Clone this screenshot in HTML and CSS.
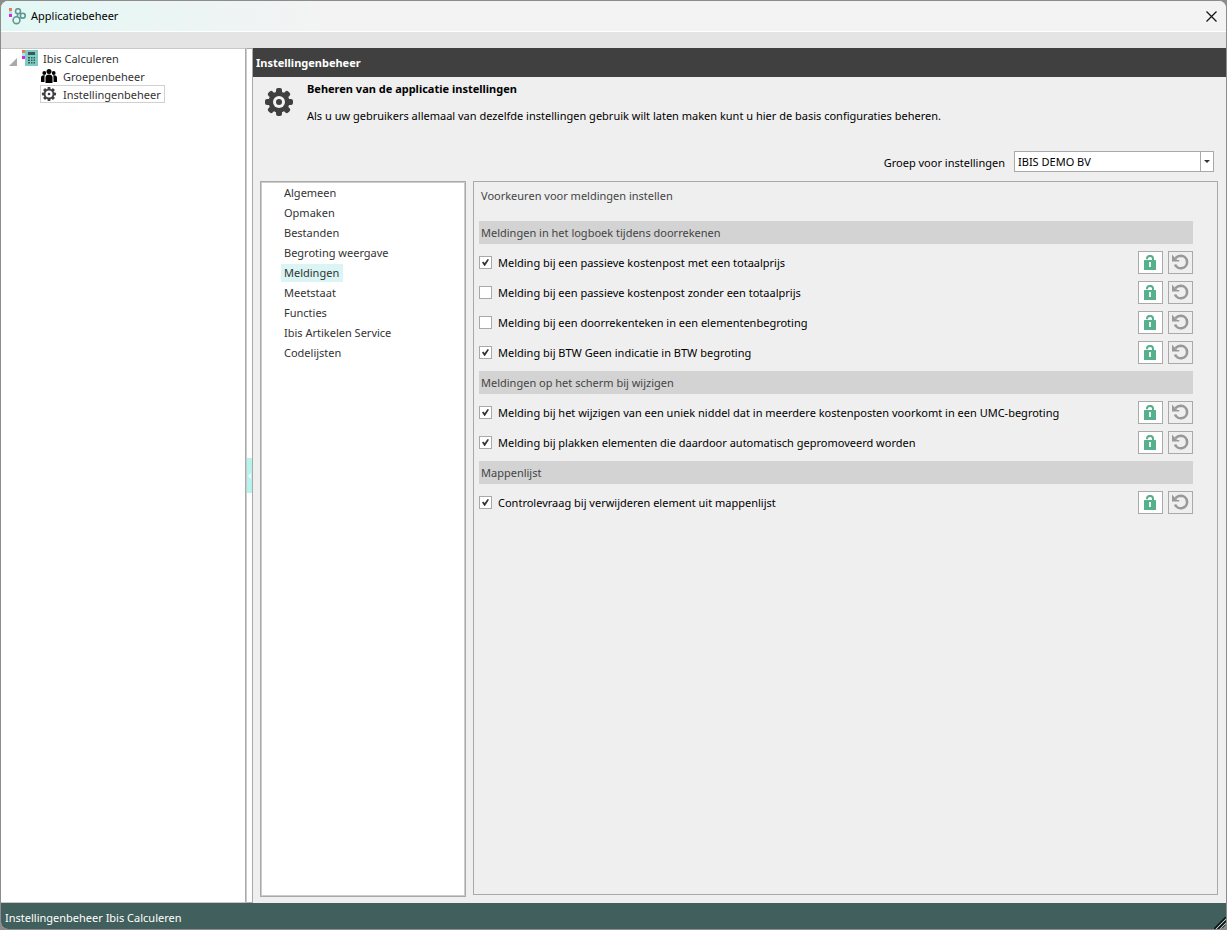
FILE: index.html
```html
<!DOCTYPE html>
<html lang="nl">
<head>
<meta charset="utf-8">
<title>Applicatiebeheer</title>
<meta name="viewport" content="width=device-width, initial-scale=1">
<link rel="stylesheet" href="styles.css">
</head>
<body>
<svg class="sprite" aria-hidden="true">
  <symbol id="gear" viewBox="0 0 28 28">
    <g fill="currentColor">
      <rect x="11" y="0" width="6" height="28" rx="2"/>
      <rect x="11" y="0" width="6" height="28" rx="2" transform="rotate(45 14 14)"/>
      <rect x="11" y="0" width="6" height="28" rx="2" transform="rotate(90 14 14)"/>
      <rect x="11" y="0" width="6" height="28" rx="2" transform="rotate(135 14 14)"/>
      <circle cx="14" cy="14" r="10.5"/>
    </g>
    <circle cx="14" cy="14" r="6" fill="#f3f3f3"/>
    <circle cx="14" cy="14" r="3" fill="currentColor"/>
  </symbol>
  <symbol id="gear-small" viewBox="0 0 14 14">
    <g fill="currentColor">
      <rect x="5.500" y="0" width="3" height="14" rx=".8"/>
      <rect x="5.500" y="0" width="3" height="14" rx=".8" transform="rotate(45 7 7)"/>
      <rect x="5.500" y="0" width="3" height="14" rx=".8" transform="rotate(90 7 7)"/>
      <rect x="5.500" y="0" width="3" height="14" rx=".8" transform="rotate(135 7 7)"/>
      <circle cx="7" cy="7" r="5.300"/>
    </g>
    <circle cx="7" cy="7" r="3.500" fill="#fff"/>
    <circle cx="7" cy="7" r="1.300" fill="currentColor"/>
  </symbol>
  <symbol id="lock" viewBox="0 0 13 15">
    <path d="M3 4.200V3.700a3 2.800 0 0 1 6 0V6" fill="none" stroke="#56b08c" stroke-width="2"/>
    <rect x="0" y="5" width="12" height="10" rx=".5" fill="#56b08c"/>
    <rect x="5" y="7" width="2" height="5" fill="#e8f5ef"/>
  </symbol>
  <symbol id="undo" viewBox="0 0 17 17">
    <path d="M3.500 4.300C4.800 2.700 6.800 1.700 9 1.700a6.300 6.300 0 1 1-6 8.800" fill="none" stroke="#999" stroke-width="2.600"/>
    <path d="M0 .5V7.500h7.300V6H5.200L2.400 3.300z" fill="#999"/>
  </symbol>
</svg>
<div class="window">
  <header class="titlebar">
    <svg class="app-icon" viewBox="0 0 17 17" aria-hidden="true">
      <path d="M0 0h3v3H0z" fill="#f0755f"/><path d="M0 3h3v3H0z" fill="#a6ebe3"/><path d="M0 6h3v3H0z" fill="#e41cf0"/>
      <g fill="none" stroke="#5d9990" stroke-width="1.6">
        <circle cx="9" cy="3.200" r="2.500"/><circle cx="13.800" cy="7.700" r="2.400"/><circle cx="7.500" cy="12.200" r="3.400"/>
        <path d="M8.500 5.500v3M10.700 5l1.300 1.200M10.300 10.500l1.500-1.200"/>
      </g>
    </svg>
    <h1 class="window-title">Applicatiebeheer</h1>
    <button class="close" type="button" aria-label="Sluiten">
      <svg viewBox="0 0 11 11" width="11" height="11"><path d="M.5.5l10 10M10.500.5l-10 10" stroke="#111" stroke-width="1.200"/></svg>
    </button>
  </header>
  <div class="toolbar"></div>
  <div class="body">
    <nav class="tree" aria-label="Onderdelen">
      <div class="node root">
        <svg class="twisty" viewBox="0 0 8 8" aria-hidden="true"><path d="M8 0v8H0z" fill="#a9a9a9"/></svg>
        <svg class="calc" viewBox="0 0 16 16" aria-hidden="true">
          <rect x="3" width="13" height="16" fill="#7cccc4"/>
          <path d="M0 0h3v3H0z" fill="#f0755f"/><path d="M0 3h3v3H0z" fill="#a6ebe3"/><path d="M0 6h3v3H0z" fill="#e41cf0"/>
          <path d="M6 2h7v3H6zM6 7h2v1.500H6zM9 7h1.500v1.500H9zM11.500 7h1.500v1.500h-1.500zM6 9.500h2V11H6zM9 9.500h1.500V11H9zM11.500 9.500h1.500V11h-1.500zM6 12h2v1.500H6zM9 12h1.500v1.500H9zM11.500 12h1.500v1.500h-1.500z" fill="#3a5a58"/>
        </svg>
        <a href="#calculeren">Ibis Calculeren</a>
      </div>
      <div class="node">
        <svg class="node-icon" viewBox="0 0 16 14" aria-hidden="true">
          <circle cx="8" cy="2.500" r="2.500"/><circle cx="3.300" cy="4" r="1.900"/><circle cx="12.700" cy="4" r="1.900"/>
          <path d="M4.500 14V8.500C4.500 6.500 6 5.500 8 5.500s3.500 1 3.500 3V14z"/>
          <path d="M0 13V9c0-1.800 1-2.700 2.600-2.700.6 0 1 .1 1.300.3-.3.700-.4 1.300-.4 2V13zM16 13V9c0-1.800-1-2.700-2.600-2.700-.6 0-1 .1-1.300.3.3.7.4 1.300.4 2V13z"/>
        </svg>
        <a href="#groepen">Groepenbeheer</a>
      </div>
      <div class="node selected">
        <svg class="node-icon" aria-hidden="true"><use href="#gear-small"/></svg>
        <a href="#instellingen" aria-current="page">Instellingenbeheer</a>
      </div>
    </nav>
    <div class="splitter">
      <button class="collapse" type="button" aria-label="Paneel inklappen"></button>
    </div>
    <main class="content">
      <h2 class="content-title">Instellingenbeheer</h2>
      <section class="intro">
        <svg class="intro-icon" aria-hidden="true"><use href="#gear"/></svg>
        <div>
          <h3>Beheren van de applicatie instellingen</h3>
          <p>Als u uw gebruikers allemaal van dezelfde instellingen gebruik wilt laten maken kunt u hier de basis configuraties beheren.</p>
        </div>
      </section>
      <div class="group-row">
        <label for="group">Groep voor instellingen</label>
        <div class="combo">
          <select id="group"><option>IBIS DEMO BV</option></select>
          <span class="combo-arrow"></span>
        </div>
      </div>
      <div class="panes">
        <nav class="categories" aria-label="Categorieën">
          <a href="#algemeen">Algemeen</a>
          <a href="#opmaken">Opmaken</a>
          <a href="#bestanden">Bestanden</a>
          <a href="#weergave">Begroting weergave</a>
          <a href="#meldingen" class="active">Meldingen</a>
          <a href="#meetstaat">Meetstaat</a>
          <a href="#functies">Functies</a>
          <a href="#artikelen">Ibis Artikelen Service</a>
          <a href="#codelijsten">Codelijsten</a>
        </nav>
        <form class="settings">
          <p class="settings-title">Voorkeuren voor meldingen instellen</p>
          <h4>Meldingen in het logboek tijdens doorrekenen</h4>
          <div class="setting"><label><input type="checkbox" checked>Melding bij een passieve kostenpost met een totaalprijs</label><button class="lock" type="button" aria-label="Vergrendelen"><svg><use href="#lock"/></svg></button><button class="undo" type="button" aria-label="Herstellen"><svg><use href="#undo"/></svg></button></div>
          <div class="setting"><label><input type="checkbox">Melding bij een passieve kostenpost zonder een totaalprijs</label><button class="lock" type="button" aria-label="Vergrendelen"><svg><use href="#lock"/></svg></button><button class="undo" type="button" aria-label="Herstellen"><svg><use href="#undo"/></svg></button></div>
          <div class="setting"><label><input type="checkbox">Melding bij een doorrekenteken in een elementenbegroting</label><button class="lock" type="button" aria-label="Vergrendelen"><svg><use href="#lock"/></svg></button><button class="undo" type="button" aria-label="Herstellen"><svg><use href="#undo"/></svg></button></div>
          <div class="setting"><label><input type="checkbox" checked>Melding bij BTW Geen indicatie in BTW begroting</label><button class="lock" type="button" aria-label="Vergrendelen"><svg><use href="#lock"/></svg></button><button class="undo" type="button" aria-label="Herstellen"><svg><use href="#undo"/></svg></button></div>
          <h4>Meldingen op het scherm bij wijzigen</h4>
          <div class="setting"><label><input type="checkbox" checked>Melding bij het wijzigen van een uniek niddel dat in meerdere kostenposten voorkomt in een UMC-begroting</label><button class="lock" type="button" aria-label="Vergrendelen"><svg><use href="#lock"/></svg></button><button class="undo" type="button" aria-label="Herstellen"><svg><use href="#undo"/></svg></button></div>
          <div class="setting"><label><input type="checkbox" checked>Melding bij plakken elementen die daardoor automatisch gepromoveerd worden</label><button class="lock" type="button" aria-label="Vergrendelen"><svg><use href="#lock"/></svg></button><button class="undo" type="button" aria-label="Herstellen"><svg><use href="#undo"/></svg></button></div>
          <h4>Mappenlijst</h4>
          <div class="setting"><label><input type="checkbox" checked>Controlevraag bij verwijderen element uit mappenlijst</label><button class="lock" type="button" aria-label="Vergrendelen"><svg><use href="#lock"/></svg></button><button class="undo" type="button" aria-label="Herstellen"><svg><use href="#undo"/></svg></button></div>
        </form>
      </div>
    </main>
  </div>
  <footer class="statusbar">
    <span>Instellingenbeheer Ibis Calculeren</span>
    <svg class="grip" viewBox="0 0 12 12" aria-hidden="true"><path d="M0 12L12 0M4 12l8-8M8 12l4-4" stroke="#111" stroke-width="1.500"/><path d="M2 12L12 2M6 12l6-6" stroke="#b5d0cc"/></svg>
  </footer>
</div>
</body>
</html>
```

FILE: styles.css
```css
* { box-sizing: border-box; }

body {
  margin: 0;
  background: #8d8b8d;
  font: 11px/18px "Noto Sans", "Open Sans", sans-serif;
  color: #000;
}

h1, h2, h3, h4, p { margin: 0; font-size: 11px; font-weight: 400; }
a { color: inherit; text-decoration: none; }
button { padding: 0; border: 0; background: none; font: inherit; }
svg { display: block; flex: none; }
.sprite { position: absolute; width: 0; height: 0; }

.window {
  display: flex;
  flex-direction: column;
  height: 100vh;
  border: 1px solid #8d8b8d;
  border-radius: 8px;
  overflow: hidden;
  background: #efefef;
}

.titlebar {
  display: flex;
  align-items: center;
  gap: 5px;
  height: 31px;
  padding: 0 9px 0 8px;
  border-bottom: 1px solid #fff;
  background: linear-gradient(90deg, #e2f8f5, #f3f3f3 320px);
}
.app-icon { width: 17px; height: 17px; }
.window-title { flex: 1; }
.close { display: grid; place-items: center; width: 11px; height: 12px; }

.toolbar { height: 16px; background: #e4e4e4; }

.body { display: flex; flex: 1; min-height: 0; }

.tree {
  width: 245px;
  border-top: 1px solid #c8c8c8;
  border-right: 1px solid #a9a9a9;
  border-bottom: 1px solid #c8c8c8;
  background: #fff;
  color: #333;
}
.node {
  display: flex;
  align-items: center;
  gap: 6px;
  width: max-content;
  height: 18px;
  margin-left: 39px;
  padding: 0 3px 0 0;
  border: 1px solid transparent;
}
.node.root { gap: 5px; margin-left: 7px; }
.node.selected { border-color: #d0d0d0; }
.node a { padding-top: 1px; }
.twisty { width: 8px; height: 8px; margin-top: 8px; }
.calc { width: 16px; height: 16px; }
.node-icon { width: 16px; height: 14px; }
.selected .node-icon { color: #404040; }

.splitter {
  display: flex;
  align-items: center;
  width: 7px;
  border: 1px solid #a9a9a9;
  border-left-color: #ccc;
  background: #fff;
}
.collapse { display: grid; place-items: center; width: 100%; height: 35px; background: #b5f3ec; }
.collapse::before { content: ""; border: 3px solid transparent; border-left: 0; border-right-color: #fff; }

.content { display: flex; flex: 1; flex-direction: column; min-width: 0; }
.content-title {
  height: 29px;
  padding: 0 3px;
  background: #404040;
  color: #fff;
  font-weight: 700;
  line-height: 29px;
}
.intro { display: flex; gap: 14px; padding: 3px 12px 0; }
.intro-icon { width: 28px; height: 28px; margin-top: 8px; color: #404040; }
.intro h3 { font-weight: 700; }
.intro p { margin-top: 9px; }

.group-row {
  display: flex;
  align-items: center;
  justify-content: flex-end;
  gap: 9px;
  margin-top: 26px;
  padding-right: 12px;
}
.group-row label { padding-top: 2px; }
.combo { position: relative; width: 200px; height: 21px; }
.combo select {
  appearance: none;
  width: 100%;
  height: 100%;
  padding: 0 16px 0 3px;
  border: 1px solid #a9a9a9;
  border-radius: 0;
  background: #fff;
  color: #000;
  font: inherit;
}
.combo-arrow {
  position: absolute;
  top: 1px;
  right: 1px;
  bottom: 1px;
  display: grid;
  place-items: center;
  width: 13px;
  border-left: 1px solid #a9a9a9;
  pointer-events: none;
}
.combo-arrow::before { content: ""; border: 3px solid transparent; border-top-color: #333; border-bottom: 0; }

.panes { display: flex; flex: 1; gap: 7px; margin-top: 9px; padding: 0 8px 6px 7px; }
.categories {
  display: flex;
  flex-direction: column;
  align-items: flex-start;
  gap: 2px;
  width: 206px;
  padding: 2px 0 0 20px;
  border: 1px solid #a9a9a9;
  outline: 1px solid #ccc;
  outline-offset: -2px;
  background: #fff;
  color: #333;
}
.categories a { padding: 0 4px 0 3px; }
.categories .active { background: #daf5f3; }

.settings {
  flex: 1;
  margin-bottom: 2px;
  padding: 5px 24px 0 5px;
  border: 1px solid #a9a9a9;
}
.settings-title { padding-left: 2px; color: #444; }
.settings h4 {
  height: 23px;
  margin: 7px 0;
  padding-left: 2px;
  background: #d3d3d3;
  color: #444;
  line-height: 23px;
}
.settings .settings-title + h4 { margin-top: 16px; }
.setting { display: flex; gap: 5px; height: 23px; margin-bottom: 7px; }
.setting label { display: flex; flex: 1; align-items: center; gap: 6px; }
.setting input {
  appearance: none;
  display: grid;
  place-items: center;
  flex: none;
  width: 13px;
  height: 13px;
  margin: 0;
  border: 1px solid #a9a9a9;
  background: #fff;
}
.setting input:checked::before {
  content: "";
  width: 7px;
  height: 7px;
  background: #333;
  clip-path: polygon(0 50%, 18% 35%, 38% 58%, 80% 0, 100% 12%, 42% 100%, 34% 100%);
}
.setting button { display: grid; place-items: center; width: 25px; height: 23px; border: 1px solid #a9a9a9; }
.setting .lock { background: #fff; }
.lock svg { width: 13px; height: 15px; }
.undo svg { width: 17px; height: 17px; }

.statusbar {
  display: flex;
  align-items: center;
  justify-content: space-between;
  height: 26px;
  padding: 3px 0 0 4px;
  background: #415f5c;
  color: #fff;
}
.grip { align-self: flex-end; width: 12px; height: 12px; }
```
